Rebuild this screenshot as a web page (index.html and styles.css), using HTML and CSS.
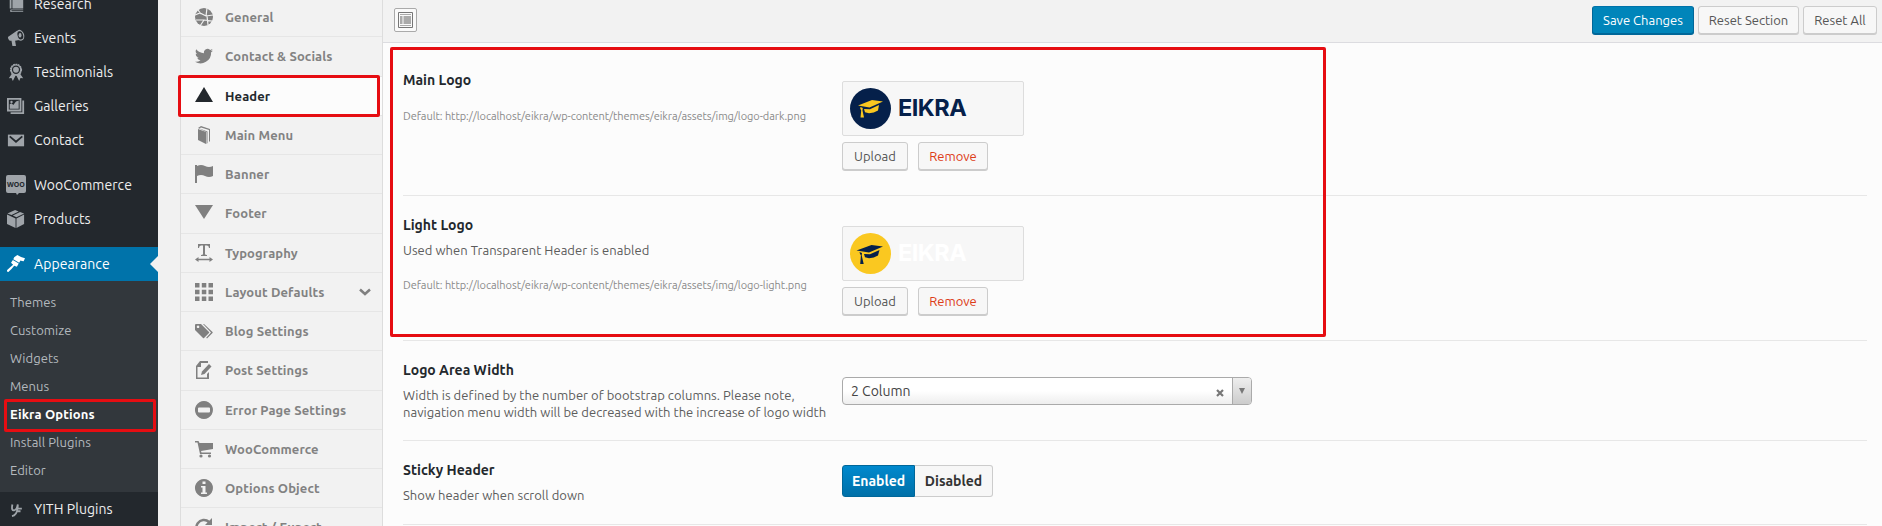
FILE: index.html
```
<!DOCTYPE html>
<html lang="en">
<head>
<meta charset="utf-8">
<title>Eikra Options</title>
<link rel="stylesheet" href="styles.css">
</head>
<body>
<div class="app">
<nav class="admin">
  <ul class="menu">
    <li class="item"><svg class="mi" viewBox="0 0 20 20"><path d="M3 1h2v14H3zM6 1h12v14H6zM4 16h14v1H5v1h13v1H4q-1-1 0-3z"/></svg><span>Research</span></li>
    <li class="item"><svg class="mi" viewBox="0 0 20 20"><path d="M1 9l10-7 4 10-6 1 1 6H6L5 13H3q-2-1-2-4z"/><ellipse cx="14.5" cy="7" rx="4.6" ry="6.2" transform="rotate(-18 14.5 7)"/><ellipse cx="14.8" cy="7" rx="3" ry="4.7" transform="rotate(-18 14.8 7)" class="cut"/><ellipse cx="14.5" cy="7" rx="1.6" ry="2.5"/></svg><span>Events</span></li>
    <li class="item"><svg class="mi" viewBox="0 0 20 20"><path d="M6 11l-4 6 3-.3L6.500 20 10 13l3.500 7 1.500-3.300 3 .3-4-6z"/><circle cx="10" cy="7.500" r="6" stroke-dasharray="2 .7" class="ring"/><circle cx="10" cy="7.500" r="4.600" class="cut"/><circle cx="10" cy="7.500" r="3.200"/></svg><span>Testimonials</span></li>
    <li class="item"><svg class="mi" viewBox="0 0 20 20"><path d="M0 1h16v15H0zM2 3v11h12V3z" fill-rule="evenodd"/><path d="M17 4h2v15H4v-2h13z"/><path d="M3 13V8l2-1 2 2 3-4 3-1v9z"/><circle cx="5" cy="5.500" r="1.300"/></svg><span>Galleries</span></li>
    <li class="item"><svg class="mi" viewBox="0 0 20 20"><path d="M1 4h18v13H1z"/><path d="M3 6l7 6 7-6" class="cutline"/></svg><span>Contact</span></li>
    <li class="gap"></li>
    <li class="item"><svg class="mi woo" viewBox="0 0 20 20"><path d="M2 0h16q2 0 2 2v14q0 2-2 2h-5l-2 2-1-2H2q-2 0-2-2V2q0-2 2-2z"/><text x="10" y="12" class="wootext">WOO</text></svg><span>WooCommerce</span></li>
    <li class="item"><svg class="mi" viewBox="0 0 20 20"><path d="M9 0l4 1.600-8 4L.5 4zM14.500 2.200L19 4l-8.500 4L6.500 6zM0 5l9.500 4.500V20L0 15.500zM19 5l-8.500 4.500V20l8.500-4.500z"/></svg><span>Products</span></li>
    <li class="gap"></li>
    <li class="item current"><svg class="mi" viewBox="0 0 20 20"><path d="M8 2.500L11.500 0q4 2.500 8.500 3.500L18.500 7q-2 0-3.500-.8l-1.500 2.300L7 4.800zM6.500 5.500l6.500 4-2 3.500-3-1q-3 4-6.500 7-2.500-.5-1-2.500Q4 13 6.800 10.800L4.500 8.500z"/></svg><span>Appearance</span></li>
  </ul>
  <ul class="sub">
    <li>Themes</li><li>Customize</li><li>Widgets</li><li>Menus</li>
    <li class="active">Eikra Options</li>
    <li>Install Plugins</li><li>Editor</li>
  </ul>
  <div class="item"><svg class="mi yith" viewBox="0 0 20 20"><path d="M6 5q-1.500 7 2 6.500Q11 11 12 5q0 12-6.500 13M10.500 9.500h6M12 12.500h3"/></svg><span>YITH Plugins</span></div>
</nav>

<aside class="tabs">
  <div class="tab"><svg class="ti" viewBox="0 0 18 18"><circle cx="9" cy="9" r="9"/><path class="cutline" d="M0 7l5-2 6 3 7-1M3 2l3 4M12 0l-1 8M1 12h8l8 1M9 12l-4 6M12 8l1 9"/></svg><span>General</span></div>
  <div class="tab"><svg class="ti" viewBox="0 0 24 24"><path d="M24 4.600a10 10 0 0 1-2.800.8 5 5 0 0 0 2.100-2.700 10 10 0 0 1-3.100 1.200 5 5 0 0 0-8.400 4.500A14 14 0 0 1 1.700 3.100a5 5 0 0 0 1.500 6.600 5 5 0 0 1-2.200-.6 5 5 0 0 0 4 4.900 5 5 0 0 1-2.300.1 5 5 0 0 0 4.600 3.400A10 10 0 0 1 0 19.500 14 14 0 0 0 21.500 7a10 10 0 0 0 2.500-2.400z"/></svg><span>Contact &amp; Socials</span></div>
  <div class="tab on"><svg class="ti" viewBox="0 0 18 18"><path d="M9 0l9 15H0z"/></svg><span>Header</span></div>
  <div class="tab"><svg class="ti" viewBox="0 0 18 18"><path d="M3 3l8 3v12l-8-4zM3 2l3-2 9 3v12l-1 1V4L6 1.500 4.500 2.500l8 3V17l-1 1V6z"/></svg><span>Main Menu</span></div>
  <div class="tab"><svg class="ti" viewBox="0 0 18 18"><path d="M0 0h2v1q4-2 8 0t8 0v10q-4 2-8 0t-8 0v7H0z"/></svg><span>Banner</span></div>
  <div class="tab"><svg class="ti" viewBox="0 0 18 18"><path d="M0 1h18L9 15z"/></svg><span>Footer</span></div>
  <div class="tab"><svg class="ti" viewBox="0 0 18 18"><path d="M3 0h12v4h-1q0-2.500-2-2.500h-2V10q0 1 2 1v1H6v-1q2 0 2-1V1.500H6Q4 1.500 4 4H3zM0 15.500L3.500 13v1.700h11V13l3.500 2.500-3.500 2.500v-1.700h-11V18z"/></svg><span>Typography</span></div>
  <div class="tab"><svg class="ti" viewBox="0 0 18 18"><path d="M0 0h4.500v4.500H0zM6.800 0h4.500v4.500H6.800zM13.500 0H18v4.500h-4.500zM0 6.800h4.500v4.500H0zM6.800 6.800h4.500v4.500H6.800zM13.500 6.800H18v4.500h-4.500zM0 13.500h4.500V18H0zM6.800 13.500h4.500V18H6.800zM13.500 13.500H18V18h-4.500z"/></svg><span>Layout Defaults</span><svg class="chev" viewBox="0 0 12 8"><path d="M1 1.500l5 4.500 5-4.500"/></svg></div>
  <div class="tab"><svg class="ti" viewBox="0 0 18 18"><path fill-rule="evenodd" d="M0 3q0-1 1-1h5l8 8q.5.500 0 1l-5 5q-.5.500-1 0L0 8zM3 3.500a1.300 1.300 0 1 0 .1 0z"/><path d="M8 2h1l8.500 8q.500.500 0 1L12 16.500l-.8-.8L16 10.500z"/></svg><span>Blog Settings</span></div>
  <div class="tab"><svg class="ti" viewBox="0 0 18 18"><path d="M5 0h8v2H6v4H2.500v10.500H12V13l2-2v7H1V5z"/><path d="M14 3l2.500 2.500-7 7.500-3.500 1 1-3.500z"/></svg><span>Post Settings</span></div>
  <div class="tab"><svg class="ti" viewBox="0 0 18 18"><path fill-rule="evenodd" d="M9 0a9 9 0 1 1-.1 0zM4 6.500q-1 0-1 1v3q0 1 1 1h10q1 0 1-1v-3q0-1-1-1z"/></svg><span>Error Page Settings</span></div>
  <div class="tab"><svg class="ti" viewBox="0 0 18 18"><path d="M0 1h3.500l1 2H18v6L6 11l.5 1.500H16V14H5L2.500 2.500H0z"/><circle cx="6" cy="16" r="1.600"/><circle cx="14.500" cy="16" r="1.600"/></svg><span>WooCommerce</span></div>
  <div class="tab"><svg class="ti" viewBox="0 0 18 18"><path fill-rule="evenodd" d="M9 0a9 9 0 1 1-.1 0zM7.500 2.500V5h3V2.500zM6 7v1.500h1.500v5H6V15h6v-1.500h-1.500V7z"/></svg><span>Options Object</span></div>
  <div class="tab"><svg class="ti" viewBox="0 0 18 18"><path class="arc" d="M16 12a7.500 7.500 0 1 1-2-8"/><path d="M17 0v7h-7z"/></svg><span>Import / Export</span></div>
</aside>

<main class="main">
  <header class="bar">
    <button class="expand"><svg viewBox="0 0 15 16"><path class="frame" d="M.5.500h14v15H.5z"/><path d="M2 2h11v1H2zM2 4h2.500v8H2zM5.500 4H13v8H5.500zM2 13h11v1H2z"/></svg></button>
    <div class="actions"><button class="btn primary">Save Changes</button><button class="btn rs">Reset Section</button><button class="btn ra">Reset All</button></div>
  </header>
  <div class="fields">
    <section class="field logo">
      <div class="label"><h3>Main Logo</h3><p class="path">Default: http://localhost/eikra/wp-content/themes/eikra/assets/img/logo-dark.png</p></div>
      <div class="control">
        <div class="preview dark"><svg class="cap" viewBox="0 0 41 41"><circle cx="20.500" cy="20.500" r="20.500"/><path d="M8 17.500l14-5.500 11 1.500-13.500 6zM14 21l6 .3 9-4.300-1 5.500q-4 2.500-9 2.800l-4-1zM10.500 19l2.300 1-.3 2.500 1.500 7h-3.500l.7-7-1-2z"/></svg><span>EIKRA</span></div>
        <div class="pair"><button class="btn up">Upload</button><button class="btn rm">Remove</button></div>
      </div>
    </section>
    <section class="field logo">
      <div class="label"><h3>Light Logo</h3><p class="desc">Used when Transparent Header is enabled</p><p class="path">Default: http://localhost/eikra/wp-content/themes/eikra/assets/img/logo-light.png</p></div>
      <div class="control">
        <div class="preview light"><svg class="cap" viewBox="0 0 41 41"><circle cx="20.500" cy="20.500" r="20.500"/><path d="M6.500 17.500l15-5.500L33 13.500l-14 6zM14 21l6 .3 9.500-4.300-1.500 5.500q-4 2.500-9 2.800l-4-1zM9.500 19l2.500 1-.3 2.500 2 8.500h-3.500l.7-8.500-1-2z"/></svg><span>EIKRA</span></div>
        <div class="pair"><button class="btn up">Upload</button><button class="btn rm">Remove</button></div>
      </div>
    </section>
    <section class="field width">
      <div class="label"><h3>Logo Area Width</h3><p class="desc">Width is defined by the number of bootstrap columns. Please note,<br>navigation menu width will be decreased with the increase of logo width</p></div>
      <div class="control"><div class="select"><span>2 Column</span><svg class="x" viewBox="0 0 8 8"><path d="M1 1l6 6M7 1L1 7"/></svg><i class="arrow"><svg viewBox="0 0 6 6"><path d="M0 0h6L3 6z"/></svg></i></div></div>
    </section>
    <section class="field sticky">
      <div class="label"><h3>Sticky Header</h3><p class="desc">Show header when scroll down</p></div>
      <div class="control"><div class="switch"><b class="yes">Enabled</b><b class="no">Disabled</b></div></div>
    </section>
  </div>
</main>
</div>
<div class="mark m1"></div><div class="mark m2"></div><div class="mark m3"></div>
</body>
</html>
```
FILE: styles.css
```
* { box-sizing: border-box; }
body { margin: 0; width: 1882px; height: 526px; overflow: hidden; position: relative; background: #f1f1f1; font-family: Ubuntu, "Noto Sans", sans-serif; font-size: 13px; color: #555; }
ul, h3, p { margin: 0; padding: 0; list-style: none; }
button { font: inherit; }
.app { display: flex; height: 526px; overflow: hidden; }

.admin { width: 158px; flex: none; background: #23282d; color: #eee; }
.menu { margin-top: -13px; }
.item { height: 34px; display: flex; align-items: center; font-size: 14px; padding-left: 7px; }
.item span { line-height: 20px; letter-spacing: .06px; }
.mi { width: 18px; height: 18px; margin-right: 9px; fill: #9fa4a9; overflow: visible; }
.cut { fill: #23282d; }
.ring { stroke: #9fa4a9; stroke-width: 1.500; }
.cutline { fill: none; stroke: #23282d; stroke-width: 2; }
.woo { width: 20px; height: 20px; margin: 0 8px 0 -1px; }
.wootext { font: bold 7px "Noto Sans", sans-serif; text-anchor: middle; fill: #23282d; }
.yith { fill: none; stroke: #9fa4a9; stroke-width: 2; }
.gap { height: 11px; }
.current { background: #0073aa; color: #fff; position: relative; }
.current .mi { fill: #fff; }
.current::after { content: ""; position: absolute; right: 0; top: 9px; border: 8px solid transparent; border-right-color: #f1f1f1; border-left: 0; }
.sub { background: #32373c; padding: 7px 0 8px 10px; color: #b4b9be; letter-spacing: .04px; }
.sub li { height: 28px; line-height: 28px; }
.sub .active { color: #fff; font-weight: 700; letter-spacing: .15px; }

.tabs { width: 203px; flex: none; margin: -2px 0 0 22px; border: solid #ddd; border-width: 0 1px; background: #f2f2f2; color: #828282; font-weight: 700; letter-spacing: .12px; }
.tab { height: 39.250px; display: flex; align-items: center; padding: 0 11px 0 14px; border-bottom: 1px solid #e6e6e6; }
.ti { width: 18px; height: 18px; margin-right: 12px; fill: #808080; overflow: visible; }
.ti .cutline { stroke: #f2f2f2; stroke-width: 1.200; }
.ti .arc { fill: none; stroke: #808080; stroke-width: 2.500; }
.on { background: #fcfcfc; color: #23282d; }
.on .ti { fill: #23282d; }
.chev { width: 12px; height: 8px; margin-left: auto; fill: none; stroke: #808080; stroke-width: 2.500; }

.main { flex: 1; background: #fcfcfc; }
.bar { height: 43px; background: #f2f2f2; border-bottom: 1px solid #dcdce0; padding: 6px 5px 0 11px; display: flex; justify-content: space-between; }
.expand { width: 23px; height: 24px; margin-top: 2px; padding: 3px; border: 1px solid #aaa; border-radius: 2px; background: #fafafa; display: flex; }
.expand svg { width: 15px; height: 16px; fill: #aaa; }
.expand .frame { fill: none; stroke: #777; }
.actions { display: flex; gap: 4px; }
.btn { height: 28px; padding: 0; border: 1px solid #ccc; border-radius: 3px; background: #f7f7f7; color: #555; box-shadow: 0 1px 0 #ccc; white-space: nowrap; }
.primary { width: 102px; background: #0085ba; border-color: #0073aa #006799 #006799; color: #fff; box-shadow: 0 1px 0 #006799; }
.rs { width: 101px; }
.ra { width: 74px; }

.fields { padding: 0 15px 0 20px; }
.field { display: flex; border-bottom: 1px solid #e7e7e7; }
.label { width: 439px; padding-top: 19px; white-space: nowrap; }
h3 { font-size: 14px; line-height: 20px; color: #23282d; }
.desc { line-height: 17px; margin-top: 7px; color: #5c5c5c; letter-spacing: .03px; }
.path { font-size: 11px; line-height: 16px; margin-top: 18px; color: #8a8a8a; letter-spacing: -.055px; }
.logo { height: 145px; }
.logo:first-child { height: 153px; }
.logo:first-child .label { padding-top: 27px; }
.logo .control { padding-top: 30px; }
.logo:first-child .control { padding-top: 38px; }
.preview { width: 182px; height: 55px; border: 1px solid #ddd; border-radius: 2px; background: #f7f7f7; padding: 6px 7px; display: flex; align-items: flex-start; }
.preview span { font: 700 23.500px/40px Inter, sans-serif; margin-left: 7px; letter-spacing: -.5px; }
.cap { width: 41px; height: 41px; }
.dark { color: #05204a; }
.dark circle, .light path { fill: #05204a; }
.dark path, .light circle { fill: #fac820; }
.light { color: #fff; }
.pair { display: flex; gap: 10px; margin-top: 6px; }
.up { width: 66px; }
.rm { width: 70px; color: #dd3d18; }
.width { height: 100px; }
.width .control { padding-top: 36px; }
.select { width: 410px; height: 28px; border: 1px solid #aaa; border-radius: 4px; background: linear-gradient(#fff 50%, #eee); display: flex; align-items: center; padding-left: 8px; font-size: 14px; color: #444; }
.x { width: 8px; height: 8px; margin: 3px 8px 0 auto; stroke: #777; stroke-width: 2.200; }
.arrow { width: 19px; height: 26px; border-left: 1px solid #aaa; background: linear-gradient(#eee, #ccc); border-radius: 0 3px 3px 0; display: grid; place-items: center; }
.arrow svg { width: 6px; height: 6px; fill: #777; }
.sticky { height: 84px; }
.sticky .control { padding-top: 24px; }
.switch { display: flex; width: 151px; height: 32px; font-size: 14px; line-height: 30px; text-align: center; }
.yes { width: 73px; background: linear-gradient(#0089ce, #0070a8); border: 1px solid #006799; border-radius: 3px 0 0 3px; color: #fff; }
.no { width: 78px; border: 1px solid #ccc; border-left: 0; border-radius: 0 3px 3px 0; background: #f7f7f7; color: #333; }

.mark { position: absolute; border: 3px solid #e60d12; border-radius: 2px; }
.m1 { left: 4px; top: 399px; width: 152px; height: 33px; }
.m2 { left: 178px; top: 75px; width: 202px; height: 42px; }
.m3 { left: 390px; top: 47px; width: 936px; height: 290px; }
```
